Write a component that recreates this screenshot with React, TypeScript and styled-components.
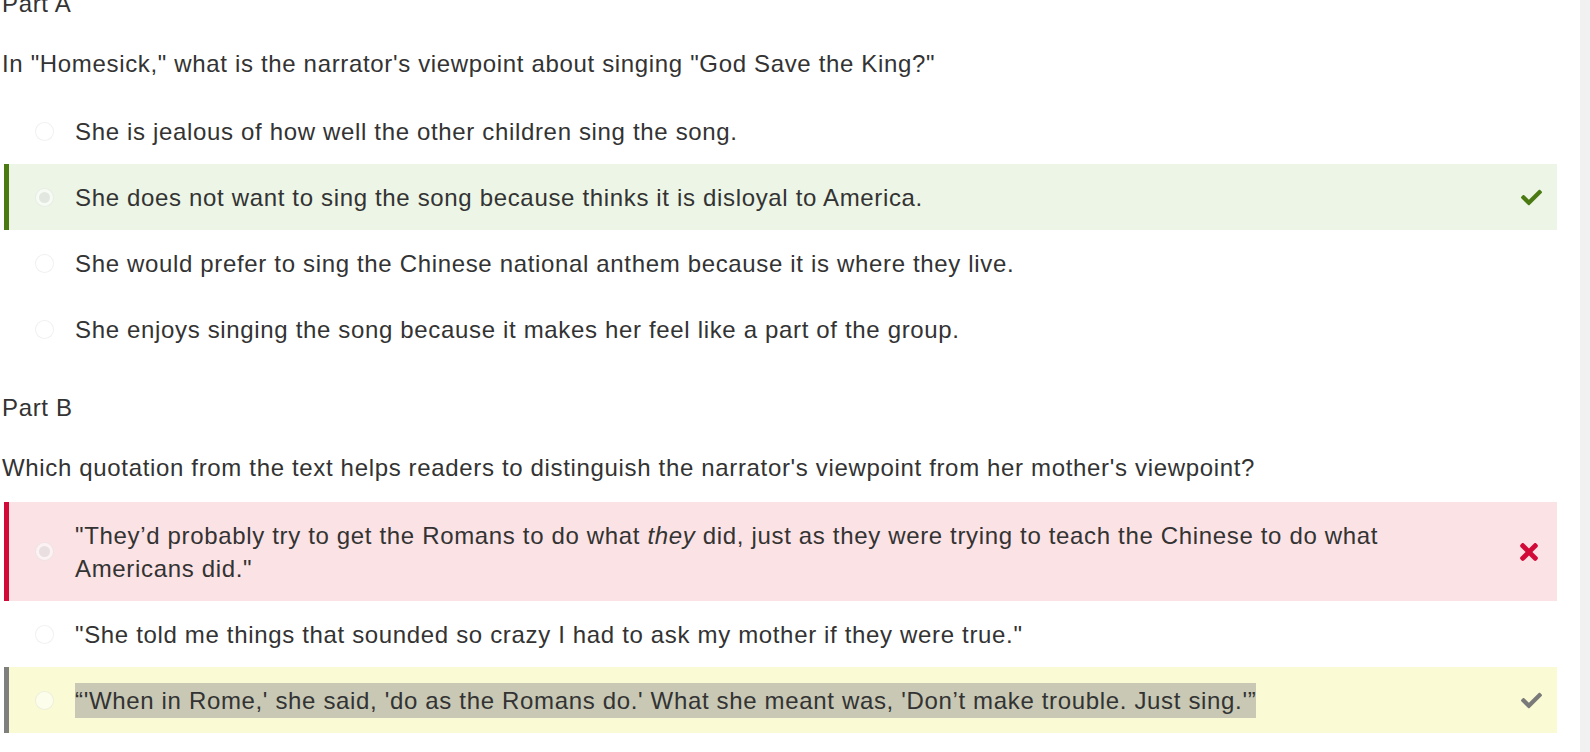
import React from "react";
import styled, { createGlobalStyle, css } from "styled-components";
import { FaCheck, FaTimes } from "react-icons/fa";

const GlobalStyle = createGlobalStyle`
  html, body {
    margin: 0;
    padding: 0;
    background: #ffffff;
    overflow: hidden;
  }
  body {
    font-family: "Liberation Sans", Arial, sans-serif;
    font-size: 24px;
    letter-spacing: 0.66px;
    line-height: 33px;
    color: #333333;
  }
`;

type Status = "none" | "correct" | "incorrect" | "key";

const palette: Record<Status, { bg: string; bar: string; icon: string }> = {
  none: { bg: "transparent", bar: "transparent", icon: "transparent" },
  correct: { bg: "#ecf5e6", bar: "#4b7a12", icon: "#4b7a12" },
  incorrect: { bg: "#fbe2e4", bar: "#d10a38", icon: "#d10a38" },
  key: { bg: "#fafad4", bar: "#7f7f7f", icon: "#7a7a7a" },
};

const Page = styled.div`
  display: flex;
  width: 1590px;
  height: 752px;
  overflow: hidden;
`;

const Main = styled.main`
  flex: 1;
  padding: 0 23px 0 2px;
  margin-top: -13px;
`;

const ScrollTrack = styled.div`
  width: 10px;
  height: 752px;
  background: #f1f1f1;
`;

const PartLabel = styled.div`
  margin-bottom: 27px;
`;

const Question = styled.div`
  margin-bottom: 18px;
`;

const Options = styled.div<{ $last?: boolean }>`
  display: flex;
  flex-direction: column;
  margin-bottom: ${(p) => (p.$last ? "0" : "29px")};
`;

const Row = styled.div<{ $status: Status }>`
  display: flex;
  align-items: center;
  margin-left: 2px;
  padding: 16.5px 0;
  border-left: 5px solid ${(p) => palette[p.$status].bar};
  background: ${(p) => palette[p.$status].bg};
`;

const Radio = styled.span<{ $checked?: boolean }>`
  flex: none;
  box-sizing: border-box;
  width: 19px;
  height: 19px;
  margin-left: 26px;
  margin-right: 21px;
  border-radius: 50%;
  border: 1.5px solid rgba(0, 0, 0, 0.06);
  background: rgba(255, 255, 255, 0.55);
  display: flex;
  align-items: center;
  justify-content: center;
  ${(p) =>
    p.$checked &&
    css`
      &::after {
        content: "";
        width: 11px;
        height: 11px;
        border-radius: 50%;
        background: rgba(0, 0, 0, 0.08);
      }
    `}
`;

const Label = styled.div`
  flex: 1;
  min-width: 0;
`;

const Highlight = styled.span`
  background: #c8c8b4;
  padding: 4px 0;
`;

const IconSlot = styled.div<{ $status: Status }>`
  flex: none;
  width: 76px;
  padding-right: 15px;
  display: flex;
  justify-content: flex-end;
  align-items: center;
  color: ${(p) => palette[p.$status].icon};
`;

type Opt = {
  text: React.ReactNode;
  status: Status;
  checked?: boolean;
};

const partA: Opt[] = [
  { text: "She is jealous of how well the other children sing the song.", status: "none" },
  {
    text: "She does not want to sing the song because thinks it is disloyal to America.",
    status: "correct",
    checked: true,
  },
  {
    text: "She would prefer to sing the Chinese national anthem because it is where they live.",
    status: "none",
  },
  {
    text: "She enjoys singing the song because it makes her feel like a part of the group.",
    status: "none",
  },
];

const partB: Opt[] = [
  {
    text: (
      <>
        "They’d probably try to get the Romans to do what <i>they</i> did, just as they were
        trying to teach the Chinese to do what Americans did."
      </>
    ),
    status: "incorrect",
    checked: true,
  },
  {
    text: "\"She told me things that sounded so crazy I had to ask my mother if they were true.\"",
    status: "none",
  },
  {
    text: (
      <Highlight>
        “'When in Rome,' she said, 'do as the Romans do.' What she meant was, 'Don’t make
        trouble. Just sing.'”
      </Highlight>
    ),
    status: "key",
  },
];

function StatusIcon({ status }: { status: Status }) {
  if (status === "correct" || status === "key") return <FaCheck size={21} />;
  if (status === "incorrect") return <FaTimes size={26} />;
  return null;
}

function OptionRow({ opt }: { opt: Opt }) {
  return (
    <Row $status={opt.status}>
      <Radio $checked={opt.checked} />
      <Label>{opt.text}</Label>
      <IconSlot $status={opt.status}>
        <StatusIcon status={opt.status} />
      </IconSlot>
    </Row>
  );
}

export default function App() {
  return (
    <>
      <GlobalStyle />
      <Page>
        <Main>
          <PartLabel>Part A</PartLabel>
          <Question>
            In "Homesick," what is the narrator's viewpoint about singing "God Save the King?"
          </Question>
          <Options>
            {partA.map((o, i) => (
              <OptionRow key={i} opt={o} />
            ))}
          </Options>
          <PartLabel>Part B</PartLabel>
          <Question>
            Which quotation from the text helps readers to distinguish the narrator's viewpoint
            from her mother's viewpoint?
          </Question>
          <Options $last>
            {partB.map((o, i) => (
              <OptionRow key={i} opt={o} />
            ))}
          </Options>
        </Main>
        <ScrollTrack />
      </Page>
    </>
  );
}
